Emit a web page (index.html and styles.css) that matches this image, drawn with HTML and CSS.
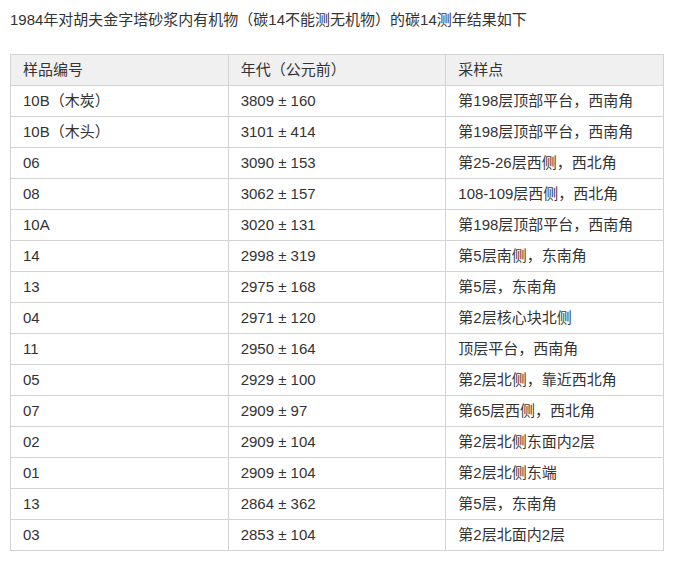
FILE: index.html
```html
<!DOCTYPE html>
<html lang="zh-CN">
<head>
<meta charset="utf-8">
<link rel="stylesheet" href="styles.css">
</head>
<body>
<p class="intro">1984年对胡夫金字塔砂浆内有机物（碳14不能测无机物）的碳14测年结果如下</p>
<table class="data">
  <thead>
    <tr><th>样品编号</th><th>年代（公元前）</th><th>采样点</th></tr>
  </thead>
  <tbody>
    <tr><td>10B（木炭）</td><td>3809 ± 160</td><td>第198层顶部平台，西南角</td></tr>
    <tr><td>10B（木头）</td><td>3101 ± 414</td><td>第198层顶部平台，西南角</td></tr>
    <tr><td>06</td><td>3090 ± 153</td><td>第25-26层西侧，西北角</td></tr>
    <tr><td>08</td><td>3062 ± 157</td><td>108-109层西侧，西北角</td></tr>
    <tr><td>10A</td><td>3020 ± 131</td><td>第198层顶部平台，西南角</td></tr>
    <tr><td>14</td><td>2998 ± 319</td><td>第5层南侧，东南角</td></tr>
    <tr><td>13</td><td>2975 ± 168</td><td>第5层，东南角</td></tr>
    <tr><td>04</td><td>2971 ± 120</td><td>第2层核心块北侧</td></tr>
    <tr><td>11</td><td>2950 ± 164</td><td>顶层平台，西南角</td></tr>
    <tr><td>05</td><td>2929 ± 100</td><td>第2层北侧，靠近西北角</td></tr>
    <tr><td>07</td><td>2909 ± 97</td><td>第65层西侧，西北角</td></tr>
    <tr><td>02</td><td>2909 ± 104</td><td>第2层北侧东面内2层</td></tr>
    <tr><td>01</td><td>2909 ± 104</td><td>第2层北侧东端</td></tr>
    <tr><td>13</td><td>2864 ± 362</td><td>第5层，东南角</td></tr>
    <tr><td>03</td><td>2853 ± 104</td><td>第2层北面内2层</td></tr>
  </tbody>
</table>
</body>
</html>
```
FILE: styles.css
```css
html, body {
  background: #ffffff;
}
body {
  margin: 0;
  padding: 8px 10px;
  font-family: "Liberation Sans", "Noto Sans CJK TC", sans-serif;
  font-size: 15px;
  color: #333333;
}
.intro {
  margin: 0 0 22px;
  line-height: 24px;
}
.data {
  border-collapse: collapse;
  table-layout: fixed;
  width: 654px;
}
.data th,
.data td {
  border: 1px solid #d3d3d3;
  padding: 5px 12px;
  line-height: 20px;
  text-align: left;
  font-weight: normal;
  vertical-align: middle;
  white-space: nowrap;
}
.data th {
  background: #f0f0f0;
}
```
